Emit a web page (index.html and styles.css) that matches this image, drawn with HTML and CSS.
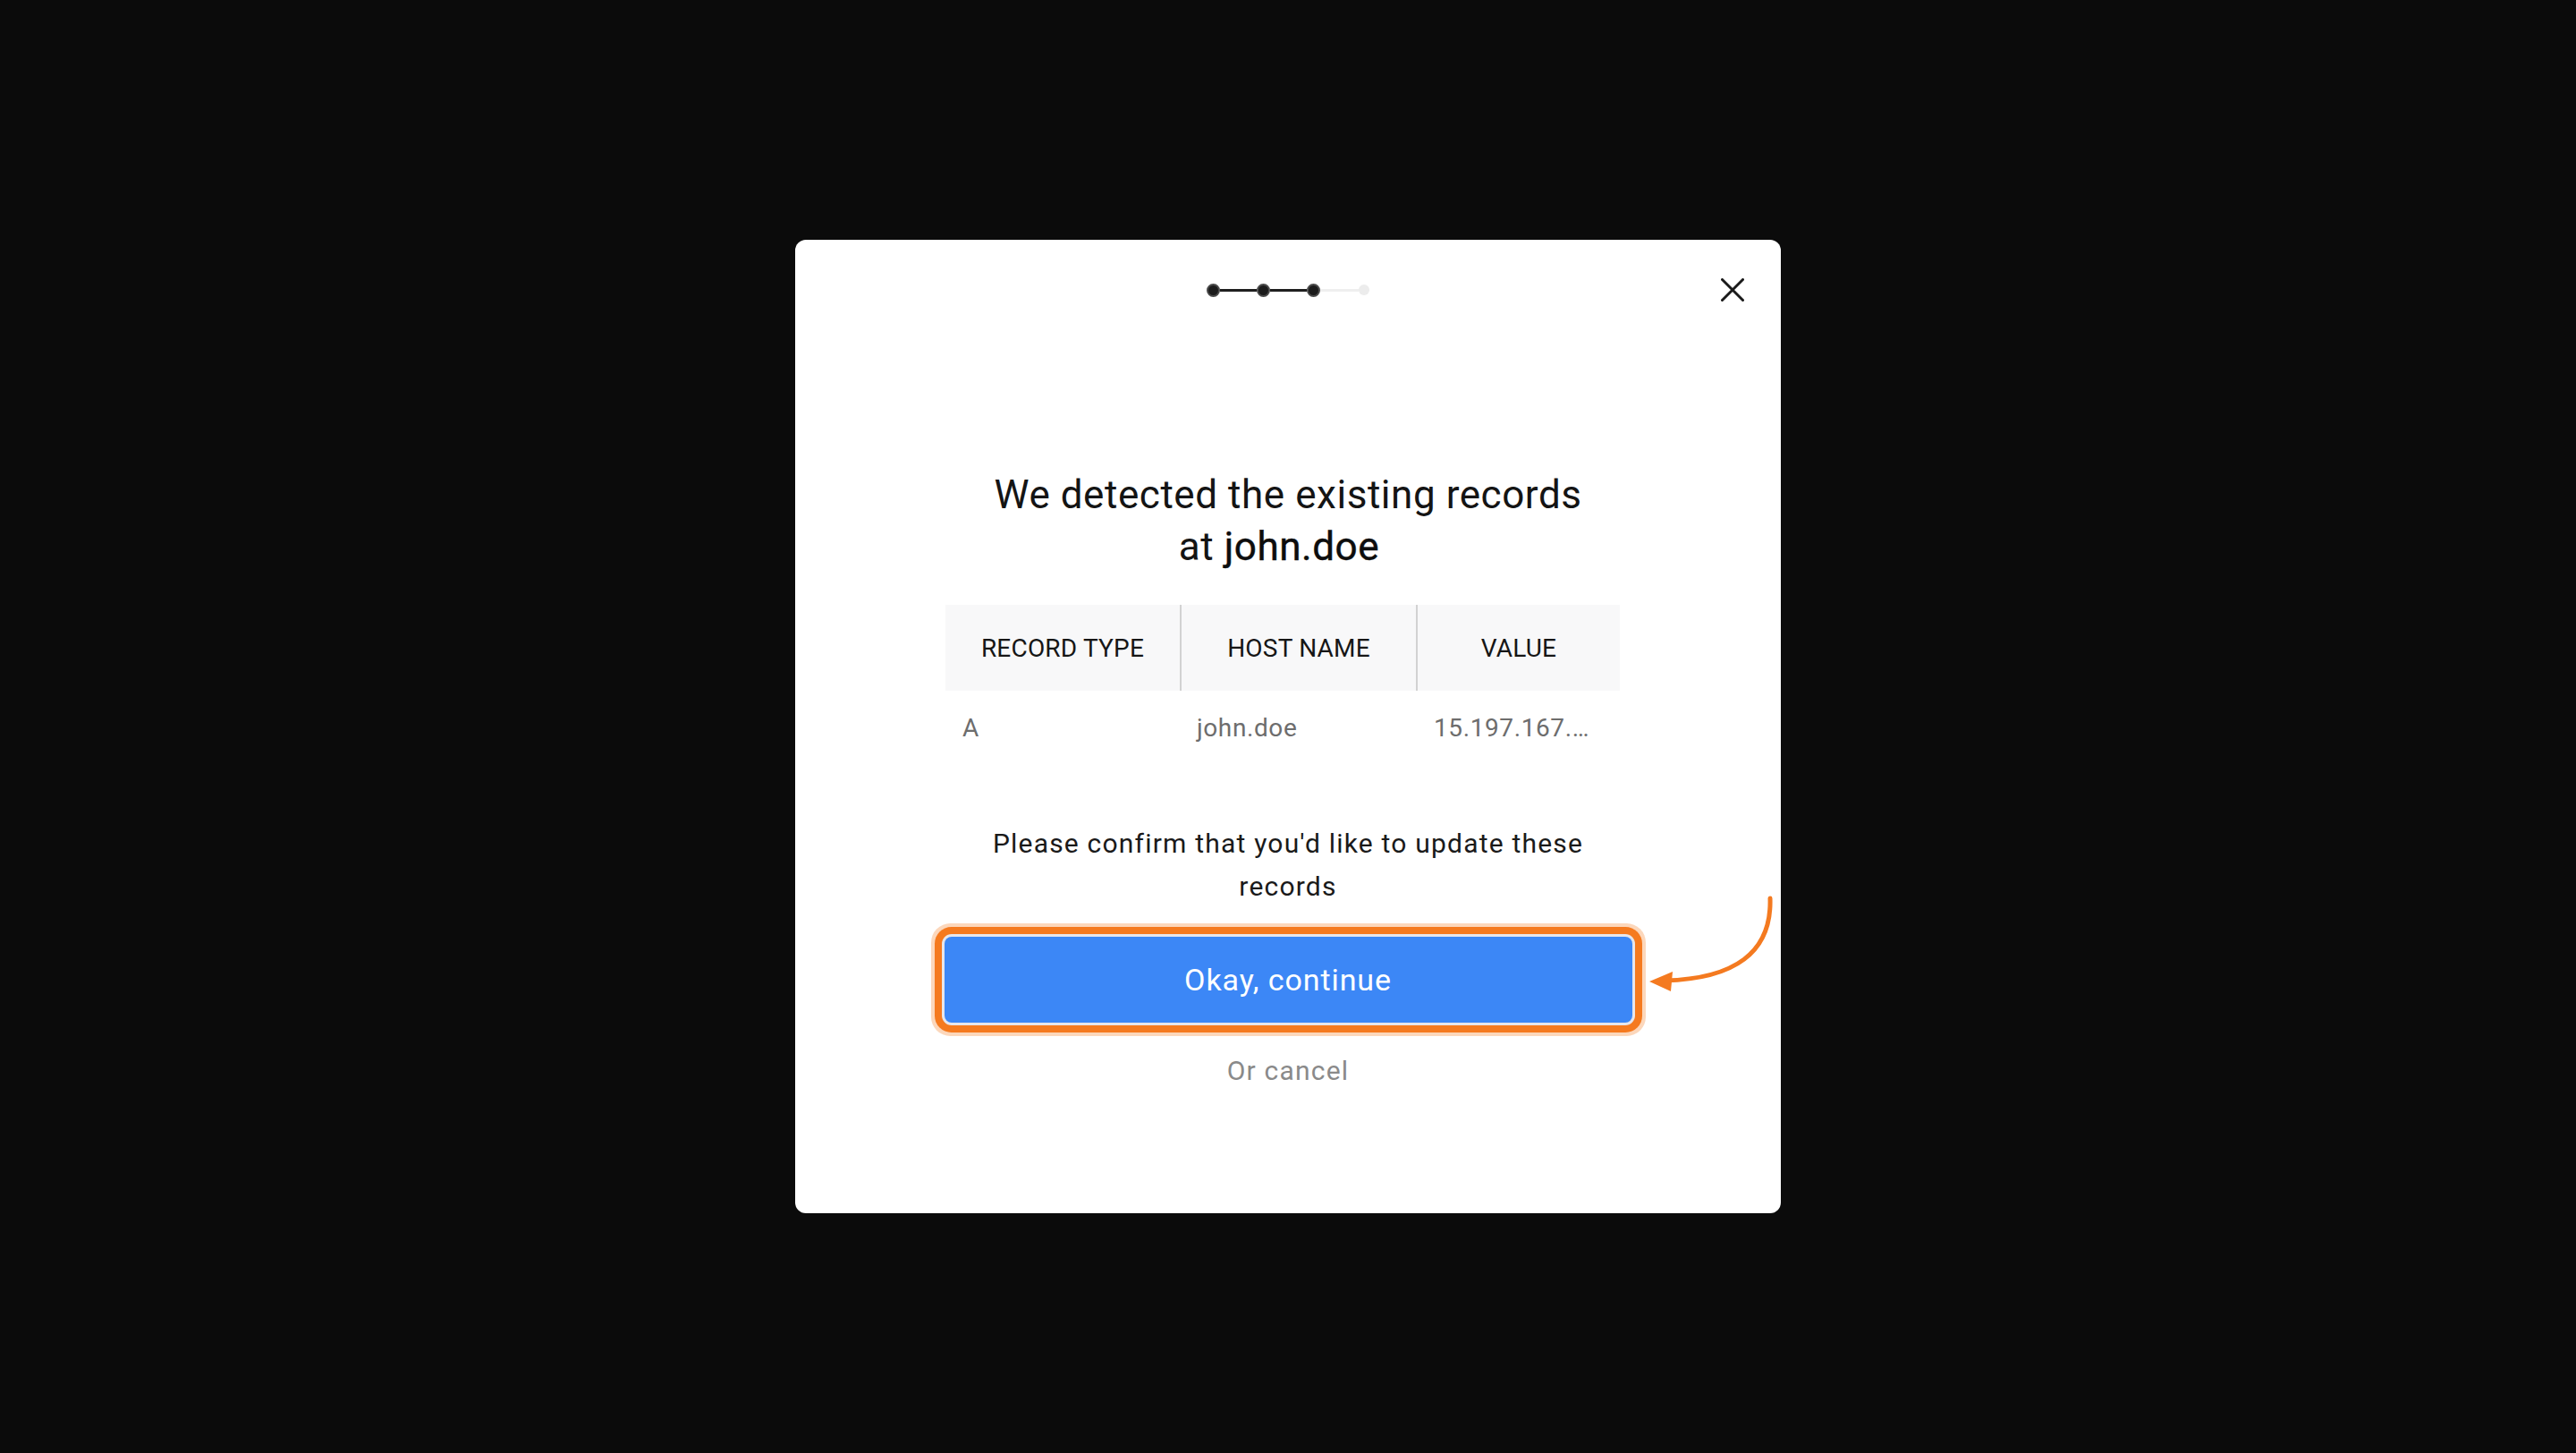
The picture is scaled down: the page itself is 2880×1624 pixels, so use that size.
FILE: index.html
```html
<!DOCTYPE html>
<html lang="en">
<head>
<meta charset="utf-8">
<title>Existing records</title>
<link rel="stylesheet" href="styles.css">
</head>
<body>
<div class="modal">
  <div class="header">
    <div class="spacer"></div>
    <div class="stepper">
      <span class="dot"></span><span class="line"></span>
      <span class="dot"></span><span class="line"></span>
      <span class="dot"></span><span class="line line-off"></span>
      <span class="dot dot-off"></span>
    </div>
    <button class="close" aria-label="Close">
      <svg width="26" height="26" viewBox="0 0 26 26"><path d="M1.5 1.5 L24.5 24.5 M24.5 1.5 L1.5 24.5" stroke="#1a1a1a" stroke-width="3" stroke-linecap="round" fill="none"/></svg>
    </button>
  </div>

  <h1 class="title">We detected the existing records<br>at <span class="domain">john.doe</span></h1>

  <div class="table">
    <div class="th">RECORD TYPE</div>
    <div class="th th-div">HOST NAME</div>
    <div class="th th-div">VALUE</div>
    <div class="td">A</div>
    <div class="td">john.doe</div>
    <div class="td td-val">15.197.167.…</div>
  </div>

  <p class="confirm">Please confirm that you'd like to update these records</p>

  <button class="primary">Okay, continue</button>
  <div class="cancel">Or cancel</div>

  <svg class="arrow" width="150" height="125" viewBox="0 0 150 125">
    <path d="M140 11 C 142 72, 100 101, 22 103" stroke="#f47a20" stroke-width="5" stroke-linecap="round" fill="none"/>
    <path d="M5 104 L31 93 L29 115 Z" fill="#f47a20"/>
  </svg>
</div>
</body>
</html>
```

FILE: styles.css
```css
html, body {
  margin: 0;
  padding: 0;
}

body {
  background: #0b0b0b;
  height: 1624px;
  display: flex;
  align-items: center;
  justify-content: center;
  font-family: Roboto, "Liberation Sans", Arial, sans-serif;
}

.modal {
  position: relative;
  width: 1102px;
  height: 1088px;
  box-sizing: border-box;
  background: #ffffff;
  border-radius: 12px;
  display: flex;
  flex-direction: column;
  align-items: center;
}

.header {
  align-self: stretch;
  height: 112px;
  box-sizing: border-box;
  padding: 0 41px;
  display: grid;
  grid-template-columns: 1fr auto 1fr;
  align-items: center;
}

.stepper {
  display: flex;
  align-items: center;
}

.dot {
  width: 15px;
  height: 15px;
  box-sizing: border-box;
  border-radius: 50%;
  background: #1c1c1c;
  border: 2px solid #4a4a4a;
}

.dot-off {
  width: 12px;
  height: 12px;
  background: #ececec;
  border: none;
}

.line {
  width: 41px;
  height: 3px;
  background: #1f1f1f;
}

.line-off {
  width: 43px;
  background: #efefef;
}

.close {
  justify-self: end;
  width: 26px;
  height: 26px;
  padding: 0;
  margin: 0;
  border: none;
  background: none;
  display: flex;
  cursor: pointer;
}

.title {
  margin: 144px 0 0 0;
  font-size: 44px;
  line-height: 58px;
  font-weight: 400;
  letter-spacing: 0.55px;
  color: #141414;
  text-align: center;
}

.domain {
  display: inline-block;
  padding-right: 20px;
  font-weight: 400;
  color: #0d0d0d;
  -webkit-text-stroke: 0.45px #0d0d0d;
}

.table {
  margin: 36px 0 0 -12px;
  display: grid;
  grid-template-columns: 262px 264px 228px;
  grid-template-rows: 96px 82px;
}

.th {
  background: #f8f8f9;
  display: flex;
  align-items: center;
  justify-content: center;
  font-size: 28px;
  letter-spacing: 0.2px;
  color: #161616;
}

.th-div {
  border-left: 2px solid #d2d2d2;
}

.td {
  display: flex;
  align-items: center;
  padding-left: 19px;
  font-size: 28px;
  letter-spacing: 0.6px;
  color: #6d6d6d;
  white-space: nowrap;
}

.td-val {
  padding-left: 20px;
}

.confirm {
  margin: 65px 0 0 0;
  width: 760px;
  font-size: 30px;
  line-height: 48px;
  letter-spacing: 1.2px;
  color: #1a1a1a;
  text-align: center;
}

.primary {
  margin-top: 32px;
  width: 769px;
  height: 96px;
  border: none;
  border-radius: 8px;
  background: #3c87f6;
  color: #ffffff;
  font-family: Roboto, "Liberation Sans", Arial, sans-serif;
  font-size: 34px;
  letter-spacing: 0.9px;
  box-shadow: 0 0 0 3px #e6e6ec, 0 0 0 11px #f57a1f, 0 0 0 15px rgba(245, 122, 31, 0.3);
  cursor: pointer;
}

.cancel {
  margin-top: 34px;
  font-size: 30px;
  line-height: 40px;
  letter-spacing: 1.2px;
  color: #8a8a8a;
}

.arrow {
  position: absolute;
  left: 950px;
  top: 725px;
}
```
